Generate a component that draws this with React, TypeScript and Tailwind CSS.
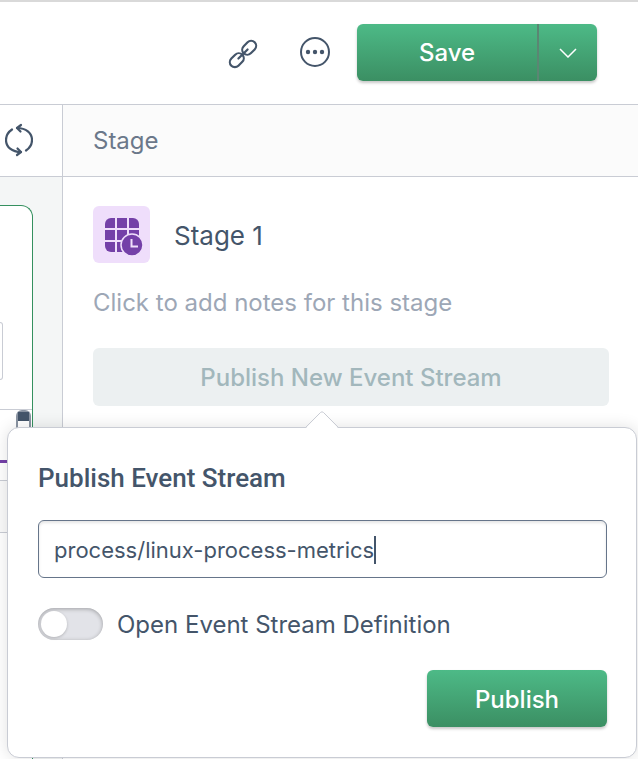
import { useState } from "react";

function LinkIcon() {
    return (
        <svg width="30" height="30" viewBox="0 0 30 30" fill="none" stroke="currentColor" strokeWidth="2.200" strokeLinecap="round">
            <g transform="rotate(-45 15 15)">
                <rect x="-1.500" y="10" width="15.500" height="10" rx="5" />
                <rect x="16" y="10" width="15.500" height="10" rx="5" />
                <path d="M8.500 15h13" />
            </g>
        </svg>
    );
}

function MoreIcon() {
    return (
        <svg width="30" height="30" viewBox="0 0 30 30" fill="currentColor">
            <circle cx="15" cy="15" r="14" fill="none" stroke="currentColor" strokeWidth="2" />
            <circle cx="8" cy="15" r="2.200" />
            <circle cx="15" cy="15" r="2.200" />
            <circle cx="22" cy="15" r="2.200" />
        </svg>
    );
}

function RefreshIcon() {
    return (
        <svg width="28" height="34" viewBox="0 0 28 34" fill="none" stroke="currentColor" strokeWidth="2.200" strokeLinecap="round" strokeLinejoin="round">
            <path d="M7 6.500C3 9.200 1 12.800 1 17c0 7 6 12 15 12" />
            <path d="M12.500 25.500 16 29l-4 3" />
            <path d="M21 27.500c4-2.700 6-6.300 6-10.500 0-7-6-12-15-12" />
            <path d="M15.500 8.500 12 5l4-3" />
        </svg>
    );
}

function StageIcon() {
    return (
        <svg width="57" height="57" viewBox="0 0 57 57" className="shrink-0 rounded-md bg-[#efdefb]">
            <clipPath id="sheet">
                <rect x="12" y="12" width="34" height="34" rx="6" />
            </clipPath>
            <g clipPath="url(#sheet)" fill="#7440a8">
                <rect x="12" y="12" width="10" height="10" />
                <rect x="24" y="12" width="10" height="10" />
                <rect x="36" y="12" width="10" height="10" />
                <rect x="12" y="24" width="10" height="10" />
                <rect x="24" y="24" width="10" height="10" />
                <rect x="36" y="24" width="10" height="10" />
                <rect x="12" y="36" width="10" height="10" />
                <rect x="24" y="36" width="10" height="10" />
            </g>
            <circle cx="39" cy="39" r="11" fill="#7440a8" stroke="#efdefb" strokeWidth="1.500" />
            <path d="M38.500 33v7.500H45" fill="none" stroke="#efdefb" strokeWidth="2" />
        </svg>
    );
}

function Header() {
    return (
        <header className="flex items-start justify-end border-t-2 border-b border-t-[#d9d9d9] border-b-[#c9ccd4] bg-white pt-[22px] pr-[41px] pb-[23px]">
            <div className="flex h-14 items-center gap-[42px] pr-[27px]">
                <button type="button" aria-label="Copy link" className="pt-1"><LinkIcon /></button>
                <button type="button" aria-label="More actions"><MoreIcon /></button>
            </div>
            <div className="flex h-[57px] overflow-hidden rounded-md bg-linear-to-b from-[#4dba87] to-[#3b8f63] text-white shadow-[0_2px_3px_rgba(0,0,0,0.22)]">
                <button type="button" className="w-[180px] text-2xl font-medium">Save</button>
                <button type="button" aria-label="Save options" className="flex w-[60px] items-center justify-center border-l-2 border-[#5b8673]">
                    <svg width="18" height="10" viewBox="0 0 18 10" fill="none" stroke="currentColor" strokeWidth="1.500">
                        <path d="m1 1 8 8 8-8" />
                    </svg>
                </button>
            </div>
        </header>
    );
}

function Canvas() {
    return (
        <section className="flex flex-col overflow-hidden border-r border-[#c9ccd4] bg-[#f4f6f6]">
            <div className="flex h-[72px] items-center border-b border-[#c9ccd4] bg-white pb-0.5 pl-[5px]">
                <button type="button" aria-label="Refresh"><RefreshIcon /></button>
            </div>
            <div className="mt-7 mr-[29px] flex flex-1 flex-col rounded-tr-xl border-t border-r border-[#35905f] bg-white">
                <div className="mt-[116px] h-[58px] w-[3px] rounded-r-md border border-l-0 border-[#c9ccd4]" />
                <div className="mt-[29px] flex h-[51px] justify-end border-t border-[#c9ccd4] pr-px">
                    <div className="w-[15px] rounded-t-md border-2 border-b-0 border-[#8a94a2]">
                        <div className="h-[9px] bg-[#44556a]" />
                    </div>
                </div>
                <div className="h-[3px] bg-[#7440a8]" />
                <div className="mt-[17px] h-[53px] border-y border-[#c9ccd4] bg-[#fafafa]" />
            </div>
        </section>
    );
}

function PublishPopover() {
    const [path, setPath] = useState("process/linux-process-metrics");
    const [open, setOpen] = useState(false);

    return (
        <form
            onSubmit={(e) => e.preventDefault()}
            className="absolute top-full -right-7 -left-[86px] mt-[21px] rounded-xl border border-[#c9ccd4] bg-white pt-[34px] pr-[29px] pb-[30px] pl-[30px] shadow-[0_0_16px_rgba(0,0,0,0.12)]"
        >
            <svg width="34" height="18" viewBox="0 0 34 18" className="absolute -top-[17px] left-1/2 -translate-x-1/2">
                <path d="M0 18 17 1l17 17z" fill="#fff" />
                <path d="M0 17 15.500 1.500q1.500-1.500 3 0L34 17" fill="none" stroke="#c9ccd4" />
            </svg>
            <h2 className="font-[Roboto,sans-serif] text-[26px] leading-8 font-medium">Publish Event Stream</h2>
            <label className="mt-[26px] flex h-[58px] items-center rounded-md border border-[#66758a] pt-0.5 pl-[15px] shadow-[inset_0_2px_3px_rgba(0,0,0,0.1)]">
                <input
                    aria-label="Event stream path"
                    value={path}
                    onChange={(e) => setPath(e.target.value)}
                    className="field-sizing-content max-w-full text-[22px] caret-transparent outline-none"
                />
                <span className="h-7 w-0.5 bg-[#44556a]" />
            </label>
            <label className="mt-[30px] flex w-fit items-center gap-[14px] text-2xl">
                <input
                    type="checkbox"
                    role="switch"
                    checked={open}
                    onChange={(e) => setOpen(e.target.checked)}
                    className="flex h-8 w-[65px] appearance-none items-center rounded-full bg-[#e2e3e8] pl-[3px] shadow-[inset_0_1px_4px_rgba(0,0,0,0.3)] before:size-[26px] before:rounded-full before:bg-white before:shadow-[0_1px_3px_rgba(0,0,0,0.2)] checked:bg-[#4dba87] checked:before:translate-x-8"
                />
                <span className="pt-0.5 leading-[30px]">Open Event Stream Definition</span>
            </label>
            <button type="submit" className="mt-[30px] ml-auto block h-[57px] w-[180px] rounded-md bg-linear-to-b from-[#4dba87] to-[#3b8f63] pt-0.5 text-2xl font-medium text-white shadow-[0_2px_3px_rgba(0,0,0,0.22)]">
                Publish
            </button>
        </form>
    );
}

function StagePanel() {
    return (
        <section className="min-w-0 bg-white">
            <div className="flex h-[72px] items-center border-b border-[#c9ccd4] bg-[#fbfbfb] px-[30px] text-2xl text-[#6b788a]">
                Stage
            </div>
            <div className="pt-[29px] pr-[29px] pl-[30px]">
                <div className="flex items-center gap-6">
                    <StageIcon />
                    <h1 className="pt-0.5 text-[26px]">Stage 1</h1>
                </div>
                <p className="mt-6 text-2xl text-[#9da7b6]">Click to add notes for this stage</p>
                <div className="relative mt-[29px]">
                    <button type="button" disabled className="h-[58px] w-full rounded-md bg-[#ecf0f1] pt-0.5 text-2xl font-medium text-[#a2b7bc]">
                        Publish New Event Stream
                    </button>
                    <PublishPopover />
                </div>
            </div>
        </section>
    );
}

export default function App() {
    return (
        <main className="flex min-h-screen flex-col overflow-hidden font-[Inter,sans-serif] text-[#44556a]">
            <Header />
            <div className="grid flex-1 grid-cols-[63px_1fr]">
                <Canvas />
                <StagePanel />
            </div>
        </main>
    );
}
